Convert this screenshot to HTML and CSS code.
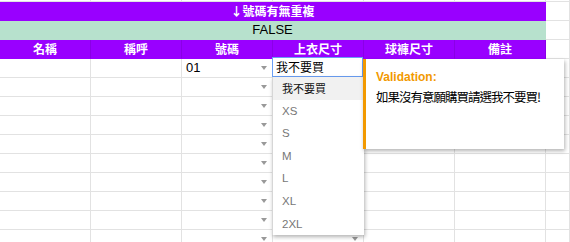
FILE: index.html
```html
<!DOCTYPE html>
<html lang="zh-Hant">
<head>
    <meta charset="UTF-8">
    <title>報名表</title>
    <link rel="stylesheet" href="styles.css">
</head>
<body>
    <div class="sheet">
        <div class="row top">
            <div class="cell"></div><div class="cell"></div><div class="cell"></div><div class="cell"></div><div class="cell"></div><div class="cell"></div><div class="cell"></div>
        </div>
        <div class="row">
            <div class="cell span purple title">↓號碼有無重複</div>
            <div class="cell"></div>
        </div>
        <div class="row">
            <div class="cell span green">FALSE</div>
            <div class="cell"></div>
        </div>
        <div class="row">
            <div class="cell purple head">名稱</div>
            <div class="cell purple head">稱呼</div>
            <div class="cell purple head">號碼</div>
            <div class="cell purple head">上衣尺寸</div>
            <div class="cell purple head">球褲尺寸</div>
            <div class="cell purple head">備註</div>
            <div class="cell"></div>
        </div>
        <div class="row">
            <div class="cell"></div><div class="cell"></div><div class="cell dd">01</div><div class="cell dd"></div><div class="cell"></div><div class="cell"></div><div class="cell"></div>
        </div>
        <div class="row">
            <div class="cell"></div><div class="cell"></div><div class="cell dd"></div><div class="cell dd"></div><div class="cell"></div><div class="cell"></div><div class="cell"></div>
        </div>
        <div class="row">
            <div class="cell"></div><div class="cell"></div><div class="cell dd"></div><div class="cell dd"></div><div class="cell"></div><div class="cell"></div><div class="cell"></div>
        </div>
        <div class="row">
            <div class="cell"></div><div class="cell"></div><div class="cell dd"></div><div class="cell dd"></div><div class="cell"></div><div class="cell"></div><div class="cell"></div>
        </div>
        <div class="row">
            <div class="cell"></div><div class="cell"></div><div class="cell dd"></div><div class="cell dd"></div><div class="cell"></div><div class="cell"></div><div class="cell"></div>
        </div>
        <div class="row">
            <div class="cell"></div><div class="cell"></div><div class="cell dd"></div><div class="cell dd"></div><div class="cell"></div><div class="cell"></div><div class="cell"></div>
        </div>
        <div class="row">
            <div class="cell"></div><div class="cell"></div><div class="cell dd"></div><div class="cell dd"></div><div class="cell"></div><div class="cell"></div><div class="cell"></div>
        </div>
        <div class="row">
            <div class="cell"></div><div class="cell"></div><div class="cell dd"></div><div class="cell dd"></div><div class="cell"></div><div class="cell"></div><div class="cell"></div>
        </div>
        <div class="row">
            <div class="cell"></div><div class="cell"></div><div class="cell dd"></div><div class="cell dd"></div><div class="cell"></div><div class="cell"></div><div class="cell"></div>
        </div>
        <div class="row">
            <div class="cell"></div><div class="cell"></div><div class="cell dd"></div><div class="cell dd"></div><div class="cell"></div><div class="cell"></div><div class="cell"></div>
        </div>

        <!-- cell editor + dropdown for 上衣尺寸 -->
        <div class="editor">我不要買</div>
        <ul class="options">
            <li class="active">我不要買</li>
            <li>XS</li>
            <li>S</li>
            <li>M</li>
            <li>L</li>
            <li>XL</li>
            <li>2XL</li>
        </ul>

        <!-- validation note -->
        <div class="validation">
            <div class="v-title">Validation:</div>
            <div class="v-text">如果沒有意願購買請選我不要買!</div>
        </div>
    </div>
</body>
</html>
```

FILE: styles.css
```css
body {
    margin: 0;
    background: #fff;
    font-family: "Liberation Sans", Arial, "Noto Sans CJK TC", sans-serif;
    color: #000;
    overflow: hidden;
}
.sheet {
    position: relative;
    width: 570px;
    height: 242px;
    overflow: hidden;
}
.row {
    display: grid;
    grid-template-columns: repeat(6, 91px) 1fr;
    height: 19px;
}
.row.top {
    height: 2px;
}
.cell {
    box-sizing: border-box;
    border-right: 1px solid #e2e2e2;
    border-bottom: 1px solid #e2e2e2;
    font-size: 13px;
    line-height: 18px;
    padding: 0 4px;
    white-space: nowrap;
    overflow: hidden;
    position: relative;
}
.span {
    grid-column: 1 / 7;
}
.purple {
    background: #9900ff;
    border-color: #9900ff;
    color: #fff;
}
.green {
    background: #b7e1cd;
    border-color: #b7e1cd;
    text-align: center;
    color: #000;
}
.title,
.head {
    font-family: "Noto Sans CJK TC", sans-serif;
    font-weight: bold;
    font-size: 12px;
    text-align: center;
}
.head {
    border-right-color: #8a00e6;
}
.dd::after {
    content: "";
    position: absolute;
    right: 5px;
    top: 7px;
    border-left: 3.5px solid transparent;
    border-right: 3.5px solid transparent;
    border-top: 4px solid #999;
}
.editor {
    position: absolute;
    left: 272px;
    top: 57px;
    width: 91px;
    height: 20px;
    box-sizing: border-box;
    border: 1px solid #6a9ff5;
    background: #fff;
    font-family: "Noto Sans CJK TC", sans-serif;
    font-size: 12px;
    line-height: 18px;
    padding-left: 3px;
}
.options {
    position: absolute;
    left: 272px;
    top: 77px;
    width: 91px;
    margin: 0;
    padding: 0;
    list-style: none;
    background: #fff;
    border-left: 1px solid #d6d6d6;
    box-shadow: 1px 2px 4px rgba(0,0,0,0.3);
}
.options li {
    height: 22.6px;
    line-height: 22px;
    padding-left: 9px;
    font-size: 11.5px;
    color: #777;
    font-family: "Liberation Sans", Arial, "Noto Sans CJK TC", sans-serif;
}
.options li.active {
    background: #f1f1f1;
    color: #111;
    font-family: "Noto Sans CJK TC", sans-serif;
    font-size: 11px;
}
.validation {
    position: absolute;
    left: 363px;
    top: 59px;
    width: 201px;
    height: 90px;
    box-sizing: border-box;
    background: #fff;
    border-left: 3px solid #f29900;
    box-shadow: 1px 2px 4px rgba(0,0,0,0.3);
    padding: 10px 0 0 10px;
}
.v-title {
    color: #f29900;
    font-weight: bold;
    font-size: 12px;
    line-height: 16px;
}
.v-text {
    font-family: "Noto Sans CJK TC", sans-serif;
    font-size: 12.5px;
    letter-spacing: -1px;
    line-height: 16px;
    margin-top: 4px;
    white-space: nowrap;
}
```
